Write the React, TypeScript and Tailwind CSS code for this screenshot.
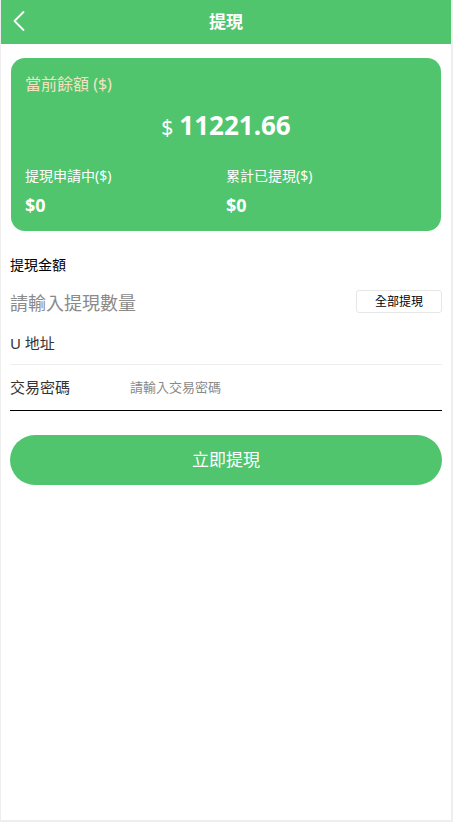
import { ChevronLeft } from 'lucide-react';

const cjk = { fontFamily: '"Noto Sans", "Noto Sans CJK TC", sans-serif' };

function Stat({ label, value }: { label: string; value: string }) {
  return (
    <div className="flex flex-col">
      <span className="text-[14px] leading-5 text-white">{label}</span>
      <span className="mt-[7px] text-[18px] font-bold leading-6 text-white">{value}</span>
    </div>
  );
}

export default function App() {
  return (
    <div className="min-h-[822px] bg-[#eeeeee] pl-px" style={cjk}>
      <div className="flex h-[820px] w-[450px] flex-col bg-white">
        <header className="relative flex h-11 items-center justify-center bg-[#50c56e]">
          <ChevronLeft className="absolute left-0 top-[3px] size-[36px] text-white" strokeWidth={1.2} />
          <h1 className="text-[17px] font-bold text-white">提現</h1>
        </header>

        <section className="mx-[10px] mt-[14px] rounded-[14px] bg-[#50c56e] px-[14px] pb-[14px] pt-[14px]">
          <p className="text-[16px] leading-6 text-[#f3e3c0]">當前餘額 ($)</p>
          <div className="mt-[10px] flex items-baseline justify-center gap-[6px] text-white">
            <span className="text-[21px]">$</span>
            <span className="text-[26px] font-bold">11221.66</span>
          </div>
          <div className="mt-[21px] grid grid-cols-2">
            <Stat label="提現申請中($)" value="$0" />
            <Stat label="累計已提現($)" value="$0" />
          </div>
        </section>

        <div className="px-[9px]">
          <p className="mt-[24px] text-[14px] leading-5 text-black">提現金額</p>
          <div className="mt-[16px] flex items-center justify-between">
            <span className="text-[18px] leading-6 text-[#8a8a8a]">請輸入提現數量</span>
            <button className="-mt-[3px] h-[23px] w-[86px] rounded-[3px] border border-[#e6e6e6] text-[12px] text-black">
              全部提現
            </button>
          </div>
          <p className="mt-[18px] text-[15px] leading-5 text-[#333333]">U 地址</p>
          <div className="mt-[11px] border-b border-[#eeeeee]" />
          <div className="flex h-[46px] items-center border-b border-black">
            <span className="w-[120px] text-[15px] text-[#333333]">交易密碼</span>
            <span className="text-[13px] text-[#888888]">請輸入交易密碼</span>
          </div>
          <button className="mt-[24px] h-[50px] w-full rounded-full bg-[#50c56e] text-[17px] text-white">
            立即提現
          </button>
        </div>
      </div>
    </div>
  );
}
